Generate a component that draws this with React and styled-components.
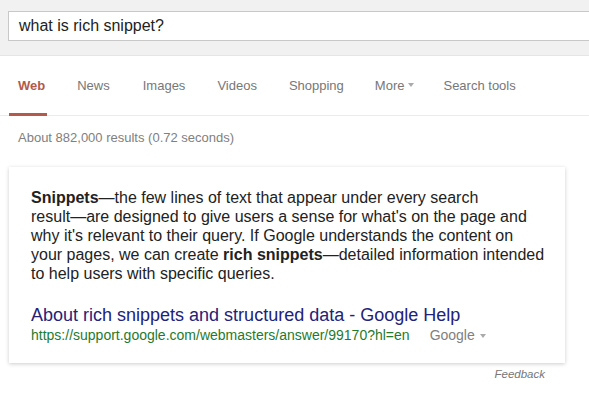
import React from 'react';
import styled, { createGlobalStyle } from 'styled-components';

const GlobalStyle = createGlobalStyle`
  body {
    margin: 0;
    background: #fff;
    font-family: Arial, "Liberation Sans", sans-serif;
  }
`;

const Header = styled.div`
  background: #f1f1f1;
  border-bottom: 1px solid #e5e5e5;
  padding: 11px 0 14px 8px;
`;

const SearchBox = styled.div`
  height: 28px;
  background: #fff;
  border: 1px solid #c8c8c8;
  border-right: none;
  padding-left: 10px;
  display: flex;
  align-items: center;
  font-size: 16px;
  color: #222;
`;

const Tabs = styled.div`
  display: flex;
  height: 59px;
  border-bottom: 1px solid #ebebeb;
  padding-left: 9px;
`;

const Tab = styled.div`
  display: flex;
  align-items: center;
  padding: 1px 2px 0 9px;
  margin-right: ${(p) => p.gap}px;
  margin-bottom: -1px;
  font-size: 13px;
  color: ${(p) => (p.active ? '#b35a4b' : '#777')};
  font-weight: ${(p) => (p.active ? 'bold' : 'normal')};
  border-bottom: 3px solid ${(p) => (p.active ? '#b35a4b' : 'transparent')};
`;

const Caret = styled.span`
  display: inline-block;
  margin-left: ${(p) => p.space}px;
  border-left: 3px solid transparent;
  border-right: 3px solid transparent;
  border-top: 4px solid #aaa;
  vertical-align: middle;
`;

const Stats = styled.div`
  padding: 14px 0 0 18px;
  font-size: 13px;
  color: #808080;
  height: 37px;
  box-sizing: border-box;
`;

const Card = styled.div`
  margin: 14px 0 0 9px;
  width: 556px;
  box-sizing: border-box;
  background: #fff;
  box-shadow: 0 1px 4px rgba(0, 0, 0, 0.2);
  padding: 21px 12px 19px 22px;
`;

const Snippet = styled.div`
  font-size: 16px;
  line-height: 19px;
  color: #222;
  white-space: nowrap;
`;

const Title = styled.a`
  display: block;
  margin-top: 21px;
  font-size: 18px;
  line-height: 22px;
  color: #22227a;
  text-decoration: none;
`;

const UrlRow = styled.div`
  display: flex;
  align-items: center;
  font-size: 14px;
  line-height: 18px;
`;

const Url = styled.span`
  color: #1f7a2e;
`;

const Source = styled.span`
  margin-left: 20px;
  color: #808080;
`;

const Feedback = styled.div`
  width: 545px;
  text-align: right;
  font-size: 11.5px;
  font-style: italic;
  color: #777;
  margin-top: 5px;
`;

const tabs = [
  { label: 'Web', active: true, gap: 21 },
  { label: 'News', gap: 22 },
  { label: 'Images', gap: 21 },
  { label: 'Videos', gap: 21 },
  { label: 'Shopping', gap: 20 },
  { label: 'More', caret: true, gap: 18 },
  { label: 'Search tools', gap: 0 },
];

const App = () => (
  <>
    <GlobalStyle />
    <Header>
      <SearchBox>what is rich snippet?</SearchBox>
    </Header>
    <Tabs>
      {tabs.map((t) => (
        <Tab key={t.label} active={t.active} gap={t.gap}>
          {t.label}
          {t.caret && <Caret space={4} />}
        </Tab>
      ))}
    </Tabs>
    <Stats>About 882,000 results (0.72 seconds)</Stats>
    <Card>
      <Snippet>
        <b>Snippets</b>—the few lines of text that appear under every search<br />
        result—are designed to give users a sense for what's on the page and<br />
        why it's relevant to their query. If Google understands the content on<br />
        your pages, we can create <b>rich snippets</b>—detailed information intended<br />
        to help users with specific queries.
      </Snippet>
      <Title href="#">About rich snippets and structured data - Google Help</Title>
      <UrlRow>
        <Url>https://support.google.com/webmasters/answer/99170?hl=en</Url>
        <Source>
          Google
          <Caret space={5} />
        </Source>
      </UrlRow>
    </Card>
    <Feedback>Feedback</Feedback>
  </>
);

export default App;
